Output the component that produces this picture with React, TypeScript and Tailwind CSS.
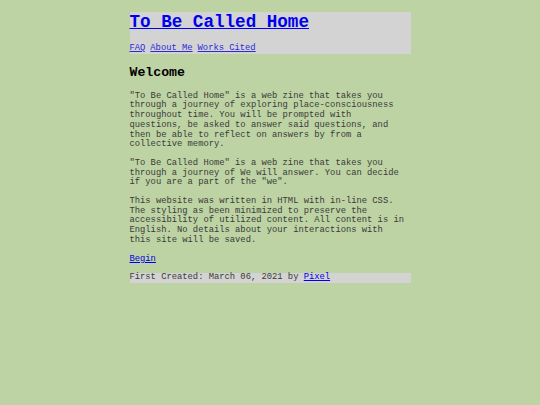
import React from "react";

export default function App() {
  const mono = { fontFamily: '"Liberation Mono", "Courier New", monospace' };
  return (
    <div className="min-h-[405px] w-full bg-[#bdd3a3] pt-3" style={mono}>
      <div className="mx-auto w-[281px]">
        <div className="bg-[#d3d3d3]">
          <h1 className="text-[17.6px] leading-[20px] font-bold">
            <a href="#" className="text-[#0000ee] underline">To Be Called Home</a>
          </h1>
          <nav className="mt-[12px] text-[8.8px] leading-[9.7px] flex gap-[5px]">
            <a href="#" className="text-[#2a2ad8] underline">FAQ</a>
            <a href="#" className="text-[#2a2ad8] underline">About Me</a>
            <a href="#" className="text-[#2a2ad8] underline">Works Cited</a>
          </nav>
        </div>
        <h2 className="mt-[11px] text-[13.2px] leading-[15px] font-bold text-black">Welcome</h2>
        <div className="mt-[12px] text-[8.8px] leading-[9.7px] text-[#3a3a3a] pr-[3px]">
          <p>"To Be Called Home" is a web zine that takes you through a journey of exploring place-consciousness throughout time. You will be prompted with questions, be asked to answer said questions, and then be able to reflect on answers by from a collective memory.</p>
          <p className="mt-[9px]">"To Be Called Home" is a web zine that takes you through a journey of We will answer. You can decide if you are a part of the "we".</p>
          <p className="mt-[9px]">This website was written in HTML with in-line CSS. The styling as been minimized to preserve the accessibility of utilized content. All content is in English. No details about your interactions with this site will be saved.</p>
          <p className="mt-[9px]"><a href="#" className="text-[#0000ee] underline">Begin</a></p>
        </div>
        <p className="mt-[9px] bg-[#d3d3d3] text-[8.8px] leading-[9.7px] text-[#3a3a3a]">First Created: March 06, 2021 by <a href="#" className="text-[#0000ee] underline">Pixel</a></p>
      </div>
    </div>
  );
}
